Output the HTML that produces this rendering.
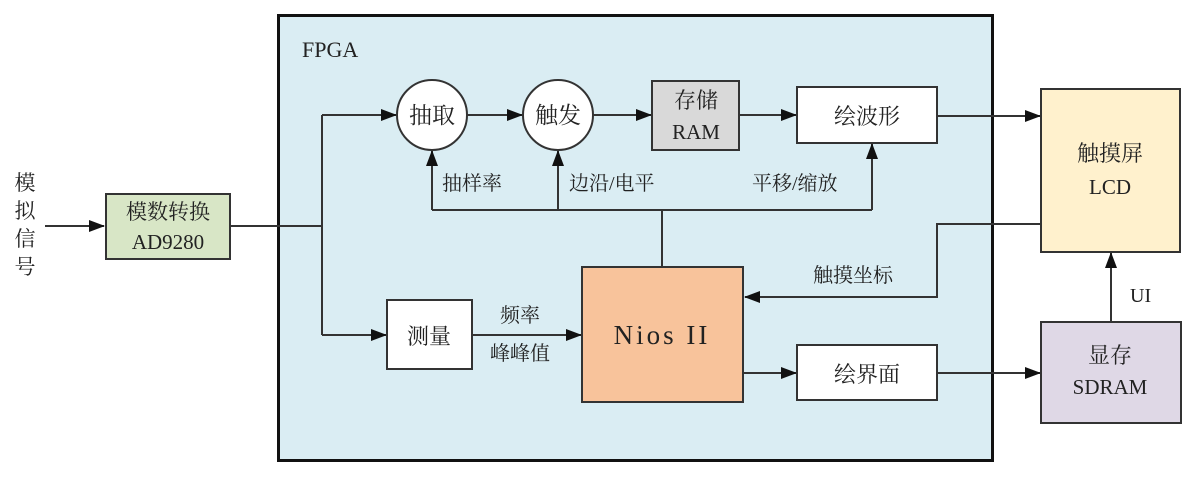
<!DOCTYPE html>
<html><head><meta charset="utf-8"><style>
body{margin:0;background:#fff;}
text{font-family:"Liberation Serif","Noto Serif CJK SC",serif;fill:#222;}
</style></head><body>
<svg width="1195" height="475" xmlns="http://www.w3.org/2000/svg">
<defs><marker id="a" markerWidth="16" markerHeight="12" refX="15" refY="6" orient="auto" markerUnits="userSpaceOnUse"><path d="M0,0 L16,6 L0,12 z" fill="#111"/></marker></defs>
<rect x="278.5" y="15.5" width="714" height="445" fill="#daedf3" stroke="#111" stroke-width="3"/>
<text x="302" y="57" font-size="22">FPGA</text>
<g stroke="#333" stroke-width="2" fill="none">
<path d="M45,226 H104" marker-end="url(#a)"/>
<path d="M231,226 H322 M322,115 V335"/>
<path d="M322,115 H396" marker-end="url(#a)"/>
<path d="M322,335 H386" marker-end="url(#a)"/>
<path d="M467,115 H522" marker-end="url(#a)"/>
<path d="M593,115 H651" marker-end="url(#a)"/>
<path d="M740,115 H796" marker-end="url(#a)"/>
<path d="M938,116 H1040" marker-end="url(#a)"/>
<path d="M432,210 V151" marker-end="url(#a)"/>
<path d="M558,210 V151" marker-end="url(#a)"/>
<path d="M872,210 V144" marker-end="url(#a)"/>
<path d="M432,210 H872 M662,210 V267"/>
<path d="M1041,224 H937 V297 H745" marker-end="url(#a)"/>
<path d="M1111,322 V253" marker-end="url(#a)"/>
<path d="M473,335 H581" marker-end="url(#a)"/>
<path d="M744,373 H796" marker-end="url(#a)"/>
<path d="M938,373 H1040" marker-end="url(#a)"/>
</g>
<g stroke="#333" stroke-width="2">
<rect x="106" y="194" width="124" height="65" fill="#d8e6c6"/>
<circle cx="432" cy="115" r="35" fill="#fff"/>
<circle cx="558" cy="115" r="35" fill="#fff"/>
<rect x="652" y="81" width="87" height="69" fill="#d9d9d9"/>
<rect x="797" y="87" width="140" height="56" fill="#fff"/>
<rect x="387" y="300" width="85" height="69" fill="#fff"/>
<rect x="582" y="267" width="161" height="135" fill="#f8c39b"/>
<rect x="797" y="345" width="140" height="55" fill="#fff"/>
<rect x="1041" y="89" width="139" height="163" fill="#fff1cd"/>
<rect x="1041" y="322" width="140" height="101" fill="#dfd8e6"/>
</g>
<g font-size="21" text-anchor="middle">
<text x="25" y="190">模</text><text x="25" y="218">拟</text><text x="25" y="246">信</text><text x="25" y="274">号</text>
<text x="168" y="219">模数转换</text><text x="168" y="249">AD9280</text>
<text x="432" y="123" font-size="23">抽取</text>
<text x="558" y="123" font-size="23">触发</text>
<text x="696" y="108" font-size="22">存储</text><text x="696" y="139" font-size="21">RAM</text>
<text x="867" y="124" font-size="22">绘波形</text>
<text x="429" y="344" font-size="22">测量</text>
<text x="662" y="344" font-size="27" letter-spacing="3">Nios II</text>
<text x="867" y="382" font-size="22">绘界面</text>
<text x="1110" y="161" font-size="22">触摸屏</text><text x="1110" y="194" font-size="21">LCD</text>
<text x="1110" y="363" font-size="22">显存</text><text x="1110" y="394" font-size="21">SDRAM</text>
</g>
<g font-size="20">
<text x="442" y="190">抽样率</text>
<text x="569" y="190">边沿/电平</text>
<text x="752" y="190">平移/缩放</text>
<text x="813" y="282">触摸坐标</text>
<text x="500" y="322">频率</text>
<text x="490" y="360">峰峰值</text>
<text x="1130" y="302">UI</text>
</g>
</svg>
</body></html>
